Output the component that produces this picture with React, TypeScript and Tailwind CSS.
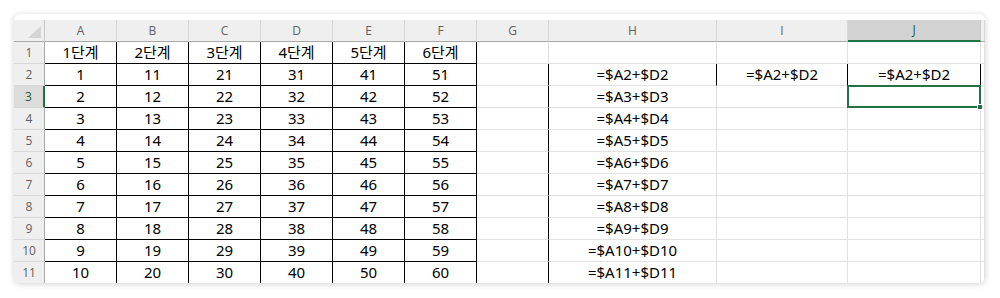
const cols = ["A", "B", "C", "D", "E", "F", "G", "H", "I", "J", ""];

const tableRows: string[][] = [
  ["1단계", "2단계", "3단계", "4단계", "5단계", "6단계"],
  ...Array.from({ length: 10 }, (_, i) => [1, 11, 21, 31, 41, 51].map((n) => String(n + i))),
];

const font = { fontFamily: '"Noto Sans", "Noto Sans CJK KR", sans-serif' };
const headFont = { fontFamily: '"Open Sans", "Noto Sans", sans-serif' };

const cellClass = (r: number, c: number) => {
  // r: 1..11, c: 0..10 (A..K)
  let right = "border-r-[#e1e1e1]";
  let bottom = "border-b-[#e1e1e1]";
  if (c <= 5) {
    right = "border-r-black";
    bottom = "border-b-black";
  }
  if (c === 6 && r >= 2) right = "border-r-black";
  if ((c === 7 || c === 8 || c === 9) && r === 2) right = "border-r-black";
  return `border-r border-b ${right} ${bottom}`;
};

const cellText = (r: number, c: number) => {
  if (c <= 5) return tableRows[r - 1][c];
  if (c === 7 && r >= 2) return `=$A${r}+$D${r}`;
  if ((c === 8 || c === 9) && r === 2) return "=$A2+$D2";
  return "";
};

const App = () => {
  return (
    <div className="w-[1000px] h-[298px] bg-white pt-[14px] pl-[14px]">
      <div className="w-[971px] h-[269px] bg-white rounded-md shadow-[0_1px_6px_rgba(0,0,0,0.18)] overflow-hidden pt-[6px]">
        <div className="relative grid grid-cols-[31px_72px_72px_72px_72px_72px_72px_72px_168px_131px_133px_4px] auto-rows-[22px]" style={font}>
          {/* select-all corner */}
          <div className="bg-[#efefef] border-r border-b border-r-[#c8c8c8] border-b-[#a9a9a9] flex items-end justify-end p-[3px]">
            <div className="w-0 h-0 border-l-[13px] border-l-transparent border-b-[12px] border-b-[#d4d4d4]" />
          </div>
          {cols.map((c, i) => (
            <div
              key={"h" + i}
              style={headFont}
              className={
                c === "J"
                  ? "bg-[#d2d2d2] border-r border-r-[#c8c8c8] border-b-2 border-b-[#217346] flex items-center justify-center text-[12px] text-[#1e5a35] pb-[1px]"
                  : "bg-[#efefef] border-r border-r-[#d8d8d8] border-b border-b-[#a9a9a9] flex items-center justify-center text-[12px] text-[#616161]"
              }
            >
              {c}
            </div>
          ))}
          {Array.from({ length: 11 }, (_, ri) => {
            const r = ri + 1;
            return [
              <div
                key={"r" + r}
                style={headFont}
                className={
                  r === 3
                    ? "bg-[#dcdcdc] border-r-2 border-r-[#217346] border-b border-b-[#d8d8d8] flex items-center justify-center text-[12px] text-[#1e5a35]"
                    : "bg-[#efefef] border-r border-r-[#a9a9a9] border-b border-b-[#d8d8d8] flex items-center justify-center text-[12px] text-[#616161]"
                }
              >
                {r}
              </div>,
              ...cols.map((_, c) => (
                <div
                  key={r + "-" + c}
                  className={`${cellClass(r, c)} flex items-center justify-center text-[15px] text-black leading-none whitespace-nowrap`}
                >
                  {cellText(r, c)}
                </div>
              )),
            ];
          })}
          {/* active cell J3 with fill handle */}
          <div className="absolute left-[833px] top-[65px] w-[134px] h-[23px] border-2 border-[#217346]">
            <div className="absolute right-[-4px] bottom-[-4px] w-[6px] h-[6px] bg-[#217346] border border-white" />
          </div>
        </div>
      </div>
    </div>
  );
};

export default App;
